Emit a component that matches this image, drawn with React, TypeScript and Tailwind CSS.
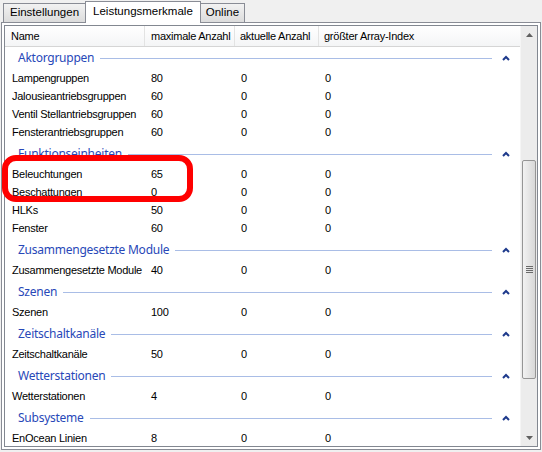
import React from 'react';

type Row = { name: string; max: string; cur: string; idx: string };
type Group = { title: string; rows: Row[] };

const groups: Group[] = [
    {
        title: 'Aktorgruppen',
        rows: [
            { name: 'Lampengruppen', max: '80', cur: '0', idx: '0' },
            { name: 'Jalousieantriebsgruppen', max: '60', cur: '0', idx: '0' },
            { name: 'Ventil Stellantriebsgruppen', max: '60', cur: '0', idx: '0' },
            { name: 'Fensterantriebsgruppen', max: '60', cur: '0', idx: '0' },
        ],
    },
    {
        title: 'Funktionseinheiten',
        rows: [
            { name: 'Beleuchtungen', max: '65', cur: '0', idx: '0' },
            { name: 'Beschattungen', max: '0', cur: '0', idx: '0' },
            { name: 'HLKs', max: '50', cur: '0', idx: '0' },
            { name: 'Fenster', max: '60', cur: '0', idx: '0' },
        ],
    },
    { title: 'Zusammengesetzte Module', rows: [{ name: 'Zusammengesetzte Module', max: '40', cur: '0', idx: '0' }] },
    { title: 'Szenen', rows: [{ name: 'Szenen', max: '100', cur: '0', idx: '0' }] },
    { title: 'Zeitschaltkanäle', rows: [{ name: 'Zeitschaltkanäle', max: '50', cur: '0', idx: '0' }] },
    { title: 'Wetterstationen', rows: [{ name: 'Wetterstationen', max: '4', cur: '0', idx: '0' }] },
    { title: 'Subsysteme', rows: [{ name: 'EnOcean Linien', max: '8', cur: '0', idx: '0' }] },
];

const cols = 'grid grid-cols-[140px_90px_84px_1fr]';

function Chevron() {
    return (
        <svg width="8" height="6" viewBox="0 0 8 6" className="shrink-0">
            <path d="M1 5 L4 2 L7 5" fill="none" stroke="#1e3a8c" strokeWidth="2" />
        </svg>
    );
}

function GroupHeader({ title, first }: { title: string; first: boolean }) {
    return (
        <div className={`${first ? 'h-[22px]' : 'h-[24px] pt-[2px]'} flex items-center pl-[13px] pr-[10px]`}>
            <span className="text-[12px] text-[#2848b8] font-['Noto_Sans','Liberation_Sans',sans-serif] leading-none whitespace-nowrap">{title}</span>
            <div className="flex-1 h-px bg-[#a9bde6] ml-[6px] mr-[10px]" />
            <Chevron />
        </div>
    );
}

export default function App() {
    return (
        <div className="w-[542px] h-[452px] bg-[#f0f0f0] relative overflow-hidden font-['Liberation_Sans',Arial,sans-serif] text-[11px] tracking-[-0.25px] text-black">
            {/* tabs */}
            <div className="flex items-end h-[22px] pl-[3px] relative z-10 tracking-normal text-[11.5px]">
                <div className="h-[19px] px-[6px] flex items-center border border-b-0 border-[#898c95] bg-gradient-to-b from-[#f2f2f2] to-[#dcdcdc]">Einstellungen</div>
                <div className="h-[22px] -ml-px px-[7px] flex items-center border border-b-0 border-[#898c95] bg-white -mb-px pb-px">Leistungsmerkmale</div>
                <div className="h-[19px] -ml-px px-[5px] flex items-center border border-b-0 border-[#898c95] bg-gradient-to-b from-[#f2f2f2] to-[#dcdcdc]">Online</div>
            </div>

            {/* panel */}
            <div className="ml-[1px] w-[540px] h-[428px] border border-[#898c95] bg-white p-[2px]">
                <div className="h-full border border-[#828790] flex">
                    <div className="flex-1 flex flex-col min-w-0">
                        <div className={`${cols} h-[21px] bg-gradient-to-b from-white to-[#f4f5f6] border-b border-[#d5d5d5] items-center whitespace-nowrap`}>
                            <div className="pl-[6px] border-r border-[#e3e3e3] h-full flex items-center">Name</div>
                            <div className="pl-[6px] border-r border-[#e3e3e3] h-full flex items-center">maximale Anzahl</div>
                            <div className="pl-[5px] border-r border-[#e3e3e3] h-full flex items-center">aktuelle Anzahl</div>
                            <div className="pl-[5px] h-full flex items-center">größter Array-Index</div>
                        </div>
                        <div className="flex-1 overflow-hidden">
                            {groups.map((g, i) => (
                                <div key={g.title}>
                                    <GroupHeader title={g.title} first={i === 0} />
                                    {g.rows.map((r) => (
                                        <div key={r.name} className={`${cols} h-[18px] items-center whitespace-nowrap`}>
                                            <div className="pl-[7px]">{r.name}</div>
                                            <div className="pl-[6px]">{r.max}</div>
                                            <div className="pl-[6px]">{r.cur}</div>
                                            <div className="pl-[6px]">{r.idx}</div>
                                        </div>
                                    ))}
                                </div>
                            ))}
                        </div>
                    </div>

                    {/* scrollbar */}
                    <div className="w-[17px] bg-[#ececec] flex flex-col border-l border-[#f5f5f5]">
                        <div className="h-[17px] flex items-center justify-center">
                            <svg width="7" height="4" viewBox="0 0 7 4"><path d="M0 4 L3.5 0 L7 4 Z" fill="#606060" /></svg>
                        </div>
                        <div className="h-[117px]" />
                        <div className="h-[219px] mx-px rounded-[2px] border border-[#959595] bg-gradient-to-r from-[#f2f2f2] to-[#d8d8d8] flex items-center justify-center">
                            <div className="flex flex-col gap-[1px]">
                                <div className="w-[7px] h-px bg-[#6a6a6a]" />
                                <div className="w-[7px] h-px bg-[#6a6a6a]" />
                                <div className="w-[7px] h-px bg-[#6a6a6a]" />
                                <div className="w-[7px] h-px bg-[#6a6a6a]" />
                            </div>
                        </div>
                        <div className="flex-1" />
                        <div className="h-[17px] flex items-center justify-center">
                            <svg width="7" height="4" viewBox="0 0 7 4"><path d="M0 0 L3.5 4 L7 0 Z" fill="#606060" /></svg>
                        </div>
                    </div>
                </div>
            </div>

            {/* red highlight */}
            <div className="absolute left-[2px] top-[155px] w-[191px] h-[47px] border-[6px] border-[#ff0000] rounded-[14px]" />
        </div>
    );
}
